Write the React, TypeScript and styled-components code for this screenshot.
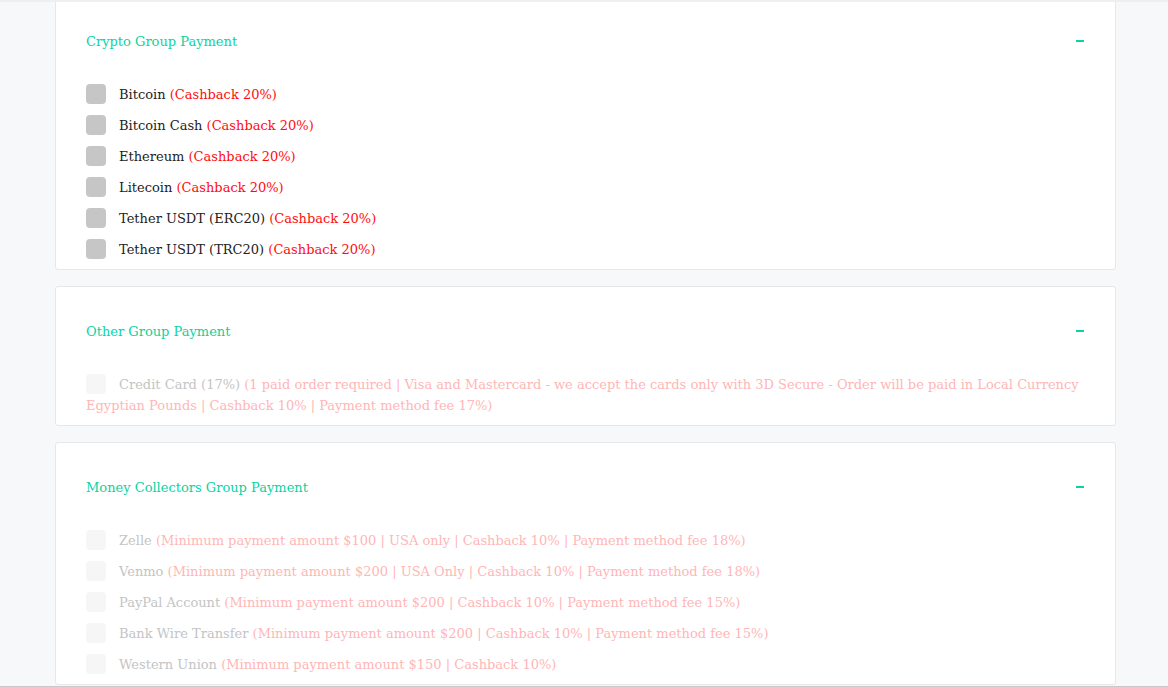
import styled, { createGlobalStyle } from "styled-components";

const Global = createGlobalStyle`
  html, body {
    margin: 0;
    padding: 0;
    background: #f7f8fa;
  }
  * { box-sizing: border-box; }
`;

const Page = styled.div`
  height: 687px;
  overflow: hidden;
  border-top: 2px solid #eeeff1;
  border-bottom: 1px solid #cdc7c7;
  font-family: "DejaVu Serif", "Liberation Serif", serif;
  font-size: 13px;
`;

const Stack = styled.div`
  margin: -6px 52px 0 55px;
  display: flex;
  flex-direction: column;
  gap: 16px;
`;

const Card = styled.section`
  background: #fff;
  border: 1px solid #e6e7e9;
  border-radius: 3px;
  padding: 34px 30px 9px 30px;
`;

const Header = styled.div`
  display: flex;
  align-items: center;
  justify-content: space-between;
  height: 20px;
  margin-bottom: 33px;
`;

const Title = styled.h3`
  margin: 0;
  font-weight: 400;
  font-size: 13px;
  color: #0ad3a3;
`;

const Collapse = styled.span`
  width: 8px;
  height: 2px;
  background: #0ad3a3;
  margin-right: 1px;
`;

const Row = styled.label<{ $disabled?: boolean }>`
  display: block;
  line-height: 21px;
  margin-bottom: 10px;
  color: ${({ $disabled }) => ($disabled ? "#c4c4c4" : "#222")};

  &:last-child {
    margin-bottom: 0;
  }
`;

const Box = styled.span<{ $disabled?: boolean }>`
  display: inline-block;
  width: 20px;
  height: 20px;
  border-radius: 4px;
  vertical-align: -5px;
  margin-right: 13px;
  background: ${({ $disabled }) => ($disabled ? "#f6f6f6" : "#c6c6c6")};
`;

const Note = styled.span<{ $disabled?: boolean }>`
  color: ${({ $disabled }) => ($disabled ? "#ffb6b6" : "#ff0d0d")};
`;

type Item = { name: string; note: string };

const groups: { title: string; disabled?: boolean; items: Item[] }[] = [
  {
    title: "Crypto Group Payment",
    items: [
      { name: "Bitcoin", note: "(Cashback 20%)" },
      { name: "Bitcoin Cash", note: "(Cashback 20%)" },
      { name: "Ethereum", note: "(Cashback 20%)" },
      { name: "Litecoin", note: "(Cashback 20%)" },
      { name: "Tether USDT (ERC20)", note: "(Cashback 20%)" },
      { name: "Tether USDT (TRC20)", note: "(Cashback 20%)" },
    ],
  },
  {
    title: "Other Group Payment",
    disabled: true,
    items: [
      {
        name: "Credit Card (17%)",
        note:
          "(1 paid order required | Visa and Mastercard - we accept the cards only with 3D Secure - Order will be paid in Local Currency Egyptian Pounds | Cashback 10% | Payment method fee 17%)",
      },
    ],
  },
  {
    title: "Money Collectors Group Payment",
    disabled: true,
    items: [
      { name: "Zelle", note: "(Minimum payment amount $100 | USA only | Cashback 10% | Payment method fee 18%)" },
      { name: "Venmo", note: "(Minimum payment amount $200 | USA Only | Cashback 10% | Payment method fee 18%)" },
      { name: "PayPal Account", note: "(Minimum payment amount $200 | Cashback 10% | Payment method fee 15%)" },
      { name: "Bank Wire Transfer", note: "(Minimum payment amount $200 | Cashback 10% | Payment method fee 15%)" },
      { name: "Western Union", note: "(Minimum payment amount $150 | Cashback 10%)" },
    ],
  },
];

export default function App() {
  return (
    <Page>
      <Global />
      <Stack>
        {groups.map((g) => (
          <Card key={g.title}>
            <Header>
              <Title>{g.title}</Title>
              <Collapse />
            </Header>
            {g.items.map((it) => (
              <Row key={it.name} $disabled={g.disabled}>
                <Box $disabled={g.disabled} />
                {it.name} <Note $disabled={g.disabled}>{it.note}</Note>
              </Row>
            ))}
          </Card>
        ))}
      </Stack>
    </Page>
  );
}
